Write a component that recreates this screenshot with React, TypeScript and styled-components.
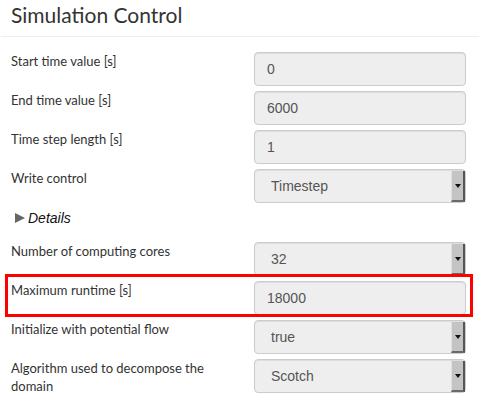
import React from 'react';
import styled, { createGlobalStyle, css } from 'styled-components';

const GlobalStyle = createGlobalStyle`
    html, body {
        margin: 0;
        padding: 0;
        background: #fff;
    }
    body {
        font-family: Lato, "Liberation Sans", sans-serif;
        font-size: 13px;
        color: #333;
    }
`;

interface Field {
    label: string;
    value: string;
    select?: boolean;
    marked?: boolean;
}

const topFields: Field[] = [
    { label: 'Start time value [s]', value: '0' },
    { label: 'End time value [s]', value: '6000' },
    { label: 'Time step length [s]', value: '1' },
    { label: 'Write control', value: 'Timestep', select: true },
];

const bottomFields: Field[] = [
    { label: 'Number of computing cores', value: '32', select: true },
    { label: 'Maximum runtime [s]', value: '18000', marked: true },
    { label: 'Initialize with potential flow', value: 'true', select: true },
    { label: 'Algorithm used to decompose the domain', value: 'Scotch', select: true },
];

const FieldRow = ({ field }: { field: Field }) => (
    <Row $marked={field.marked}>
        <Label>{field.label}</Label>
        {field.select ? (
            <SelectBox>
                {field.value}
                <SelectButton>
                    <Caret />
                </SelectButton>
            </SelectBox>
        ) : (
            <InputBox>{field.value}</InputBox>
        )}
    </Row>
);

const App = () => {
    return (
        <Page>
            <GlobalStyle />
            <Title>Simulation Control</Title>
            <Form>
                {topFields.map((f) => (
                    <FieldRow key={f.label} field={f} />
                ))}
                <Details>
                    <Arrow />
                    <span>Details</span>
                </Details>
                {bottomFields.map((f) => (
                    <FieldRow key={f.label} field={f} />
                ))}
            </Form>
        </Page>
    );
};

export default App;

const Page = styled.div`
    width: 479px;
    padding-left: 1px;
    box-sizing: border-box;
`;

const Title = styled.h3`
    margin: 0;
    padding: 3px 10px 9px;
    font-family: Lato, "Liberation Sans", sans-serif;
    font-weight: 400;
    font-size: 21px;
    line-height: 24px;
    color: #333;
    border-bottom: 1px solid #eee;
`;

const Form = styled.div`
    padding: 14px 0 0 10px;
`;

const Row = styled.div<{ $marked?: boolean }>`
    position: relative;
    display: grid;
    grid-template-columns: 243px 212px;
    align-items: start;
    min-height: 39px;

    ${(p) =>
        p.$marked &&
        css`
            &:after {
                content: '';
                position: absolute;
                left: -6px;
                right: 6px;
                top: -6px;
                bottom: 2px;
                border: 3px solid #f00;
                pointer-events: none;
            }
        `}
`;

const Label = styled.div`
    line-height: 18px;
    padding-right: 36px;
    margin-top: 1px;
    color: #333;
`;

const fieldBase = css`
    position: relative;
    box-sizing: border-box;
    height: 34px;
    margin-top: 1px;
    background: #eee;
    border: 1px solid #ccc;
    border-radius: 4px;
    box-shadow: inset 0 1px 1px rgba(0, 0, 0, 0.075);
    font-family: "Liberation Sans", Arial, sans-serif;
    font-size: 14px;
    line-height: 32px;
    color: #555;
`;

const InputBox = styled.div`
    ${fieldBase};
    padding-left: 12px;
`;

const SelectBox = styled.div`
    ${fieldBase};
    padding-left: 16px;
`;

const SelectButton = styled.div`
    position: absolute;
    top: 1px;
    bottom: 0;
    right: 0;
    width: 14px;
    box-sizing: border-box;
    background: #c4c4c4;
    border-left: 1px solid #e0e0e0;
    border-right: 2px solid #555;
    border-bottom: 2px solid #6a6a6a;
    display: flex;
    align-items: center;
    justify-content: center;
`;

const Caret = styled.span`
    width: 0;
    height: 0;
    border-left: 3px solid transparent;
    border-right: 3px solid transparent;
    border-top: 4px solid #111;
`;

const Details = styled.div`
    display: flex;
    align-items: center;
    gap: 3px;
    height: 20px;
    margin: 1px 0 13px 4px;
    font-family: "Liberation Sans", Arial, sans-serif;
    font-style: italic;
    font-size: 14px;
    color: #111;
`;

const Arrow = styled.span`
    width: 0;
    height: 0;
    border-top: 5px solid transparent;
    border-bottom: 5px solid transparent;
    border-left: 10px solid #666;
`;
